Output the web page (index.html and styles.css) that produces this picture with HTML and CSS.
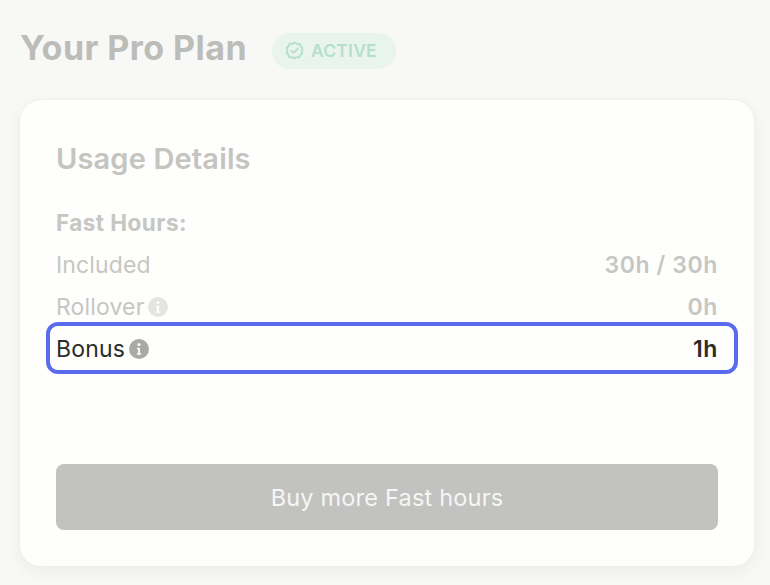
FILE: index.html
```html
<!DOCTYPE html>
<html lang="en">
<head>
<meta charset="utf-8">
<title>Your Pro Plan</title>
<link rel="stylesheet" href="styles.css">
</head>
<body>
<main class="page">
  <header class="head">
    <h1 class="title">Your Pro Plan</h1>
    <span class="badge">
      <svg class="badge-icon" viewBox="0 0 20 20" aria-hidden="true"><path d="M10 1.8l2.5 1.2 2.7-.2 1.1 2.5 2 1.9-.8 2.8.8 2.8-2 1.9-1.1 2.5-2.7-.2-2.5 1.2-2.5-1.2-2.7.2-1.1-2.5-2-1.9.8-2.8-.8-2.8 2-1.9 1.1-2.5 2.7.2z" fill="none" stroke="currentColor" stroke-width="2" stroke-linejoin="round"/><path d="M6.6 10.2l2.4 2.3 4.4-4.6" fill="none" stroke="currentColor" stroke-width="1.9" stroke-linecap="round" stroke-linejoin="round"/></svg>
      ACTIVE
    </span>
  </header>
  <section class="card">
    <h2 class="card-title">Usage Details</h2>
    <h3 class="group-title">Fast Hours:</h3>
    <div class="row row-muted"><span class="label">Included</span><span class="value">30h / 30h</span></div>
    <div class="row row-muted"><span class="label">Rollover
      <svg class="info info-faint" viewBox="0 0 20 20" aria-hidden="true"><circle cx="10" cy="10" r="10" fill="currentColor"/><circle cx="10" cy="5.6" r="1.5" fill="#fff"/><path d="M8 8.8h2.9v5.4H12.2v1.5H7.9v-1.5h1.2v-3.9H8z" fill="#fff"/></svg></span><span class="value">0h</span></div>
    <div class="row row-active"><span class="label">Bonus
      <svg class="info" viewBox="0 0 20 20" aria-hidden="true"><circle cx="10" cy="10" r="10" fill="currentColor"/><circle cx="10" cy="5.6" r="1.5" fill="#fff"/><path d="M8 8.8h2.9v5.4H12.2v1.5H7.9v-1.5h1.2v-3.9H8z" fill="#fff"/></svg></span><span class="value">1h</span></div>
    <button class="buy" type="button">Buy more Fast hours</button>
  </section>
</main>
</body>
</html>
```
FILE: styles.css
```css
* { box-sizing: border-box; }
html, body { margin: 0; height: 100%; }
body {
  background: #f8f8f7;
  font-family: "Inter", "Liberation Sans", sans-serif;
  overflow: hidden;
}
.page { padding: 28px 15px 0 19px; }
.head { display: flex; align-items: center; gap: 25px; height: 40px; margin: 0 0 31px 1px; }
.title { margin: 0; font-size: 34px; line-height: 40px; font-weight: 700; color: #bcbcb8; letter-spacing: 0.45px; white-space: nowrap; }
.badge {
  display: flex; align-items: center; gap: 7px;
  height: 36px; width: 124px; margin-top: 5px; padding-left: 13px;
  border-radius: 18px; background: #e9f4ef; color: #b4e0cd;
  font-size: 17.5px; font-weight: 600; letter-spacing: 0.2px;
}
.badge-icon { width: 19px; height: 19px; flex: none; }
.card {
  height: 468px;
  padding: 41px 36px 36px;
  background: #fefefc;
  border: 1px solid #efefec;
  border-radius: 22px;
  box-shadow: 0 5px 16px rgba(0, 0, 0, 0.05);
  display: flex; flex-direction: column;
}
.card-title { margin: 0 0 31px; font-size: 29px; line-height: 36px; font-weight: 600; color: #c4c4c1; letter-spacing: 0.15px; }
.group-title { margin: 0; font-size: 22.5px; line-height: 30px; font-weight: 700; color: #c6c6c3; letter-spacing: 0.45px; }
.row {
  display: flex; justify-content: space-between; align-items: center;
  height: 42px; font-size: 23px; color: #c6c6c3; letter-spacing: 0.15px;
}
.row:first-of-type { margin-top: 6px; }
.label { display: flex; align-items: center; gap: 4px; font-weight: 400; }
.value { font-weight: 600; letter-spacing: 0.6px; }
.info { width: 20px; height: 20px; color: #a9a9a6; }
.info-faint { color: #e4e4e2; }
.row-active {
  height: 52px;
  margin: -6px -20px 0 -10px;
  padding: 1px 16px 0 6px;
  border: 4px solid #5b6bee;
  border-radius: 12px;
  color: #2c2c28;
}
.buy {
  margin-top: auto;
  height: 66px;
  border: 0;
  border-radius: 8px;
  background: #c2c2c0;
  color: #f6f6f4;
  font: 400 23.5px "Inter", "Liberation Sans", sans-serif;
  letter-spacing: 0.2px;
}
```
